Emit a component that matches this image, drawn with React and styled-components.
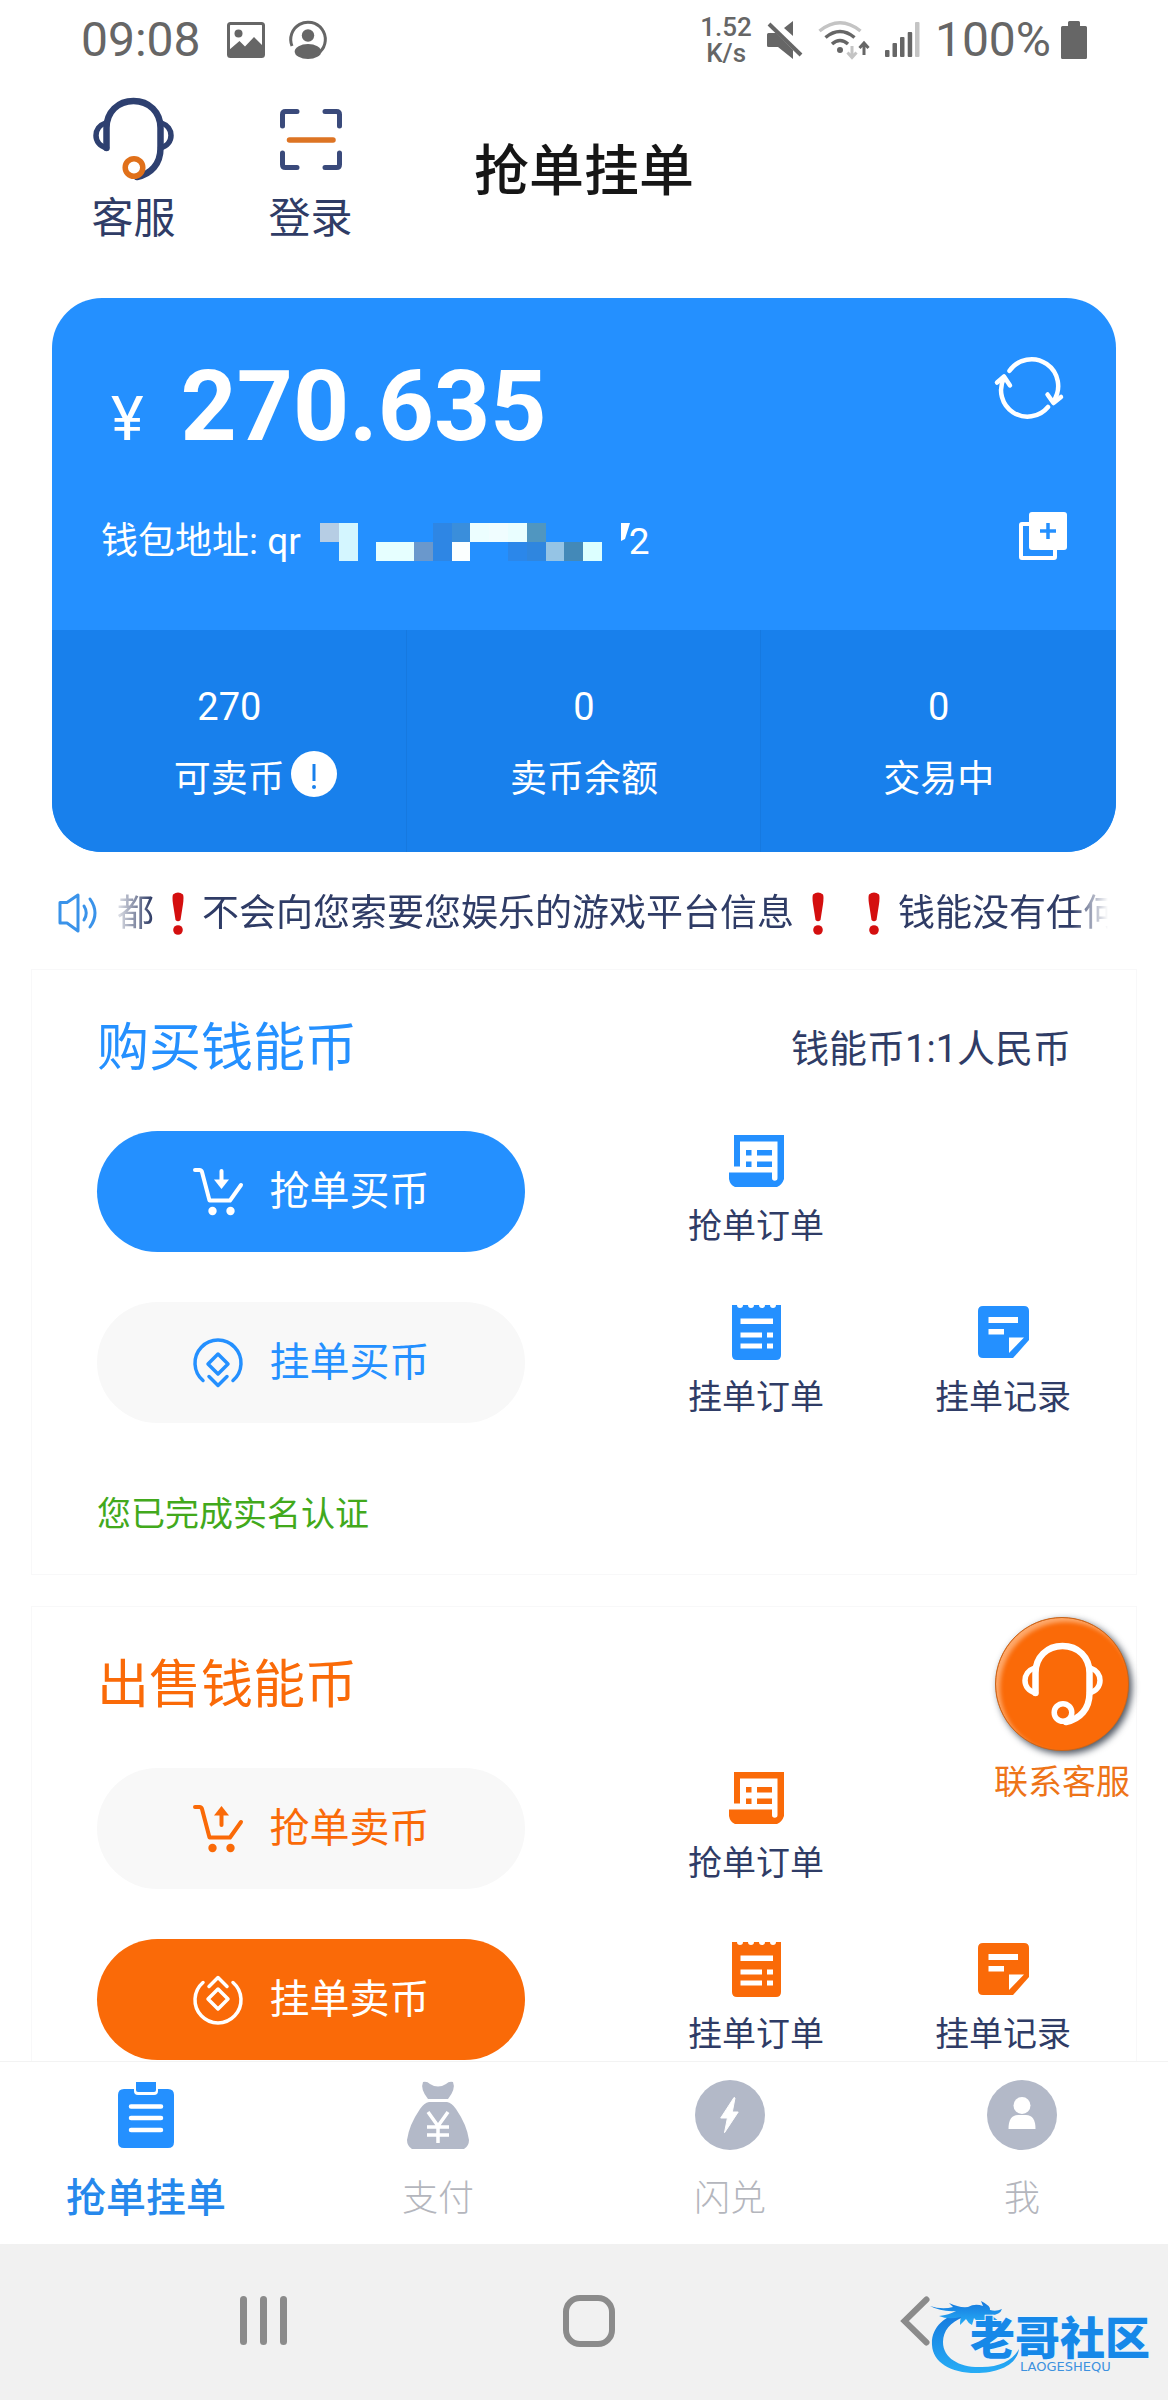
import React from 'react';
import styled, { createGlobalStyle } from 'styled-components';

const BLUE = '#2490ff';
const ORANGE = '#fa6a08';
const NAVY = '#2f3c66';
const STATUS = '#666666';
const MUTED = '#b3b9c8';

const GlobalStyle = createGlobalStyle`
  *, *::before, *::after { box-sizing: border-box; }
  body {
    margin: 0;
    background: #fff;
    color: ${NAVY};
    font-family: Roboto, 'Noto Sans CJK SC', sans-serif;
  }
  h1, h2, p { margin: 0; font-weight: 400; }
  button {
    padding: 0;
    border: none;
    background: none;
    color: inherit;
    font: inherit;
    cursor: pointer;
  }
  a { color: inherit; text-decoration: none; }
  svg { display: block; flex: none; overflow: visible; }
`;

const Shell = styled.div`
  display: flex;
  flex-direction: column;
  height: 100vh;
  overflow: hidden;
`;

const Viewport = styled.div`
  position: relative;
  flex: 1;
  min-height: 0;
`;

const Scroller = styled.main`
  height: 100%;
  overflow-y: auto;
  scrollbar-width: none;
`;

const StatusBar = styled.div`
  display: flex;
  justify-content: space-between;
  align-items: center;
  height: 76px;
  padding: 3px 81px 0;
  color: ${STATUS};
  font-size: 48px;
  line-height: 56px;
`;

const StatusGroup = styled.div`
  display: flex;
  align-items: center;
  gap: ${props => props.$gap}px;
`;

const Clock = styled.span`
  margin-right: 2px;
`;

const Speed = styled.span`
  font-size: 26px;
  font-weight: 500;
  line-height: 26px;
  text-align: center;
`;

const Battery = styled.span`
  display: flex;
  align-items: center;
  gap: 10px;
`;

const Header = styled.header`
  display: grid;
  grid-template-columns: 1fr auto 1fr;
  align-items: center;
  padding: 22px 45px 0;
`;

const HeaderActions = styled.div`
  display: flex;
`;

const HeaderButton = styled.button`
  display: flex;
  flex-direction: column;
  align-items: center;
  gap: 14px;
  width: 177px;
  font-size: 42px;
  line-height: 50px;
`;

const HeaderIcon = styled.span`
  display: flex;
  align-items: center;
  height: 82px;
`;

const Title = styled.h1`
  color: #161616;
  font-size: 55px;
  font-weight: 500;
  line-height: 64px;
`;

const Wallet = styled.section`
  margin: 54px 52px 0;
  border-radius: 50px;
  overflow: hidden;
  background: ${BLUE};
  color: #fff;
`;

const WalletTop = styled.div`
  display: flex;
  flex-direction: column;
  gap: 43px;
  padding: 47px 49px 58px 49px;
`;

const AmountRow = styled.div`
  display: flex;
  justify-content: space-between;
  align-items: flex-start;
  padding: 0 4px 0 10px;
`;

const Amount = styled.div`
  display: flex;
  align-items: baseline;
  gap: 37px;
  font-size: 98px;
  font-weight: 700;
  line-height: 124px;
`;

const Currency = styled.span`
  font-size: 62px;
  font-weight: 400;
  line-height: 64px;
`;

const RefreshButton = styled.button`
  display: flex;
  align-items: center;
  height: 88px;
`;

const AddressRow = styled.div`
  display: flex;
  justify-content: space-between;
  align-items: flex-start;
`;

const Address = styled.p`
  display: flex;
  align-items: center;
  font-size: 37px;
  line-height: 60px;
`;

const MaskGap = styled.span`
  margin-left: 19px;
`;

const Stats = styled.div`
  display: grid;
  grid-template-columns: repeat(3, 1fr);
  background: #1880ec;
`;

const Stat = styled.div`
  display: flex;
  flex-direction: column;
  align-items: center;
  gap: 23px;
  padding: 52px 0 47px;
  font-size: 38px;
  line-height: 50px;

  & + & { box-shadow: -1px 0 0 #1679e0; }
`;

const StatLabel = styled.span`
  position: relative;
  font-size: 37px;
`;

const StatBadge = styled.span`
  position: absolute;
  top: -4px;
  left: 100%;
  padding-left: 6px;
`;

const Notice = styled.div`
  display: flex;
  align-items: center;
  gap: 14px;
  margin: 32px 60px 27px 58px;
`;

const Ticker = styled.p`
  display: flex;
  align-items: center;
  flex: 1;
  min-width: 0;
  padding: 2px 0 0 5px;
  overflow: hidden;
  white-space: nowrap;
  font-size: 37px;
  line-height: 56px;
  mask-image: linear-gradient(to right, transparent 0, #000 40px, #000 calc(100% - 36px), transparent 100%);
`;

const MarkBox = styled.span`
  display: flex;
  flex: none;
  justify-content: center;
  width: 48px;
  margin-right: ${props => (props.$spaced ? 8 : 0)}px;
`;

const Panel = styled.section`
  margin: 0 31px 31px;
  padding: 49px 65px 38px;
  border: 1px solid #f8f8f9;
`;

const PanelHead = styled.div`
  display: flex;
  justify-content: space-between;
  align-items: center;
  margin-bottom: 52px;
`;

const PanelTitle = styled.h2`
  color: ${props => props.$color};
  font-size: 52px;
  line-height: 60px;
`;

const Rate = styled.span`
  font-size: 38px;
  line-height: 60px;
`;

const ActionGrid = styled.div`
  display: grid;
  grid-template-columns: 1fr 136px 136px;
  gap: 50px 111px;
`;

const PillButton = styled.button`
  display: flex;
  justify-content: center;
  align-items: center;
  gap: 27px;
  grid-column: 1;
  max-width: 428px;
  height: 121px;
  border-radius: 61px;
  background: ${props => (props.$filled ? props.$color : '#f8f8f8')};
  color: ${props => (props.$filled ? '#fff' : props.$color)};
  font-size: 40px;
  line-height: 50px;
`;

const OrderLink = styled.a`
  display: flex;
  flex-direction: column;
  align-items: center;
  gap: 13px;
  font-size: 34px;
  line-height: 44px;
  white-space: nowrap;
`;

const OrderIcon = styled.span`
  display: flex;
  align-items: center;
  height: 60px;
  color: ${props => props.$color};
`;

const Verified = styled.p`
  margin-top: 69px;
  color: #42a91c;
  font-size: 34px;
  line-height: 44px;
`;

const FloatingSupport = styled.button`
  position: absolute;
  right: 38px;
  bottom: 257px;
  display: flex;
  flex-direction: column;
  align-items: center;
  gap: 9px;
  color: #ee7418;
  font-size: 34px;
  line-height: 44px;
`;

const SupportDisc = styled.span`
  display: flex;
  justify-content: center;
  align-items: center;
  width: 134px;
  height: 134px;
  border: 1px solid #c7651c;
  border-radius: 50%;
  background: ${ORANGE};
  box-shadow: 3px 3px 7px rgba(20, 30, 45, 0.75), inset 4px 4px 4px rgba(255, 190, 140, 0.75);
`;

const TabBar = styled.nav`
  display: grid;
  grid-template-columns: repeat(4, 1fr);
  padding: 18px 0 20px;
  border-top: 1px solid #f3f3f3;
  background: #fff;
`;

const Tab = styled.a`
  display: flex;
  flex-direction: column;
  align-items: center;
  gap: 24px;
  color: ${props => (props.$active ? '#2688ec' : '#b4b6bd')};
  font-size: ${props => (props.$active ? 40 : 36)}px;
  font-weight: ${props => (props.$active ? 500 : 300)};
  line-height: 50px;
`;

const TabIcon = styled.span`
  display: flex;
  align-items: center;
  height: 70px;
`;

const SystemNav = styled.footer`
  position: relative;
  display: grid;
  grid-template-columns: repeat(3, 1fr);
  height: 156px;
  padding: 0 90px 3px 100px;
  background: #f1f1f1;
`;

const SystemButton = styled.button`
  display: flex;
  justify-content: center;
  align-items: center;
`;

const Watermark = styled.div`
  position: absolute;
  right: 12px;
  bottom: 23px;
`;

const PictureIcon = () => (
  <svg width="38" height="36" viewBox="0 0 38 36" fill={STATUS}>
    <rect x="1.5" y="1.5" width="35" height="33" rx="2" fill="none" stroke={STATUS} strokeWidth="3" />
    <circle cx="11.5" cy="11.5" r="4" />
    <path d="M2 28 12.500 19 18 24.500 27 15 36 24V34H2Z" />
  </svg>
);

const ProfileIcon = () => (
  <svg width="38" height="38" viewBox="0 0 38 38" fill={STATUS}>
    <path d="M3 25A17.300 17.300 0 1 1 31 31" fill="none" stroke={STATUS} strokeWidth="3" />
    <circle cx="19" cy="14.500" r="6.200" />
    <ellipse cx="19" cy="30.500" rx="13.300" ry="7.500" />
  </svg>
);

const MuteIcon = () => (
  <svg width="36" height="38" viewBox="0 0 36 38" fill={STATUS}>
    <path d="M26 0V15L17 7Z" />
    <path d="M1.500 12H9L26 29V38L11 26H1.500Q0 26 0 24.500V13.500Q0 12 1.500 12Z" />
    <path d="M2 3 34 34" stroke={STATUS} strokeWidth="4" />
  </svg>
);

const WifiIcon = () => (
  <svg width="52" height="38" viewBox="0 0 52 38" fill="none" stroke={STATUS} strokeWidth="3.500">
    <path d="M1.500 10Q22-6.500 42.500 10" stroke="#c4c4c4" />
    <path d="M7.500 16.500Q22 4.500 36.500 16.500" />
    <path d="M14 23Q22 16 30 23" />
    <circle cx="22" cy="29" r="3" fill={STATUS} stroke="none" />
    <path d="M34 25V36M29.500 31.500 34 36.500 38.500 31.500" stroke="#c4c4c4" strokeWidth="3" />
    <path d="M46 34V22M41.500 27 46 22 50.500 27" strokeWidth="3" />
  </svg>
);

const SignalIcon = () => (
  <svg width="35" height="35" viewBox="0 0 35 35" fill={STATUS}>
    <rect x="0" y="28" width="4.500" height="7" rx="1" />
    <rect x="7.500" y="21" width="4.500" height="14" rx="1" />
    <rect x="15" y="15" width="4.500" height="20" rx="1" />
    <rect x="22.700" y="10" width="4.500" height="25" rx="1" />
    <rect x="30" y="0" width="4.500" height="35" rx="1" fill="#c4c4c4" />
  </svg>
);

const BatteryIcon = () => (
  <svg width="26" height="38" viewBox="0 0 26 38" fill={STATUS}>
    <path d="M8.500 0H17.500Q19 0 19 1.500V5H24.500Q26 5 26 6.500V36.500Q26 38 24.500 38H1.500Q0 38 0 36.500V6.500Q0 5 1.500 5H7V1.500Q7 0 8.500 0Z" />
  </svg>
);

const HeadsetIcon = ({ color, micColor }) => (
  <svg width="81" height="82" viewBox="0 0 81 82" fill="none" stroke={color} strokeWidth="6.500" strokeLinecap="round">
    <path d="M13.500 50V30C13.500 14 25 3 40.500 3S67.500 14 67.500 30V50C67.500 66 58 76 44 79" />
    <path d="M13.500 50C6.500 48 3 43 3 37.500S6.500 27 12.500 25" strokeWidth="5.500" />
    <path d="M67.500 50C74.500 48 78 43 78 37.500S74.500 27 68.500 25" strokeWidth="5.500" />
    <circle cx="41" cy="69.500" r="8.800" stroke={micColor} strokeWidth="5.500" />
  </svg>
);

const ScanIcon = () => (
  <svg width="62" height="61" viewBox="0 0 62 61" fill="none" stroke="#3a4a7b" strokeWidth="5" strokeLinecap="round">
    <path d="M2.500 17V5.500Q2.500 2.500 5.500 2.500H17M45 2.500H56.500Q59.500 2.500 59.500 5.500V17M2.500 44V55.500Q2.500 58.500 5.500 58.500H17M45 58.500H56.500Q59.500 58.500 59.500 55.500V44" />
    <path d="M9.500 31H53" stroke="#dd7424" strokeWidth="5.500" />
  </svg>
);

const RefreshIcon = () => (
  <svg width="68" height="58" viewBox="0 0 68 58" fill="none" stroke="#fff" strokeWidth="4.500" strokeLinecap="round" strokeLinejoin="round">
    <path d="M14.500 10.800A26.500 26.500 0 0 1 58.500 41" />
    <path d="M52.500 34.500 58.500 43 66 37" />
    <path d="M53 47A26.500 26.500 0 0 1 9 18" />
    <path d="M2 22.500 9 16.500 15 25.500" />
  </svg>
);

const CopyIcon = () => (
  <svg width="48" height="48" viewBox="0 0 48 48" fill="none">
    <rect x="2" y="12" width="34" height="34" rx="1" stroke="#fff" strokeWidth="4" />
    <rect x="10" y="0" width="38" height="38" rx="3" fill="#fff" />
    <path d="M29 11V27M21 19H37" stroke={BLUE} strokeWidth="3.500" />
  </svg>
);

// obscured middle part of the wallet address, one entry per block: column, row, colour
const MASK_BLOCKS = [
  [0, 0, '#b6cde4'], [1, 0, '#d4f6ff'], [1, 1, '#d4f6ff'],
  [3, 1, '#e6ffff'], [4, 1, '#e6ffff'], [5, 1, '#6a98cc'],
  [6, 0, '#2e86e4'], [6, 1, '#2e86e4'], [7, 0, '#3a8edb'], [7, 1, '#fbffff'],
  [8, 0, '#ecfeff'], [9, 0, '#f0fdff'], [10, 0, '#e9feff'], [11, 0, '#5096c0'],
  [10, 1, '#2b87ea'], [11, 1, '#2f86df'], [12, 1, '#95c4e5'], [13, 1, '#4389b8'], [14, 1, '#dcffff'],
];

const AddressMask = () => (
  <svg width="309" height="38" viewBox="0 0 309 38" shapeRendering="crispEdges">
    {MASK_BLOCKS.map(([col, row, color]) => (
      <rect key={`${col}-${row}`} x={col * 18.8} y={row * 19} width="18.800" height="19" fill={color} />
    ))}
    <path d="M301 0H310L305 16 301 18Z" fill="#fff" shapeRendering="auto" />
  </svg>
);

const AlertIcon = () => (
  <svg width="46" height="46" viewBox="0 0 46 46">
    <circle cx="23" cy="23" r="23" fill="#fff" />
    <path d="M23 13V30" stroke="#1880ec" strokeWidth="3" />
    <circle cx="23" cy="36" r="2" fill="#1880ec" />
  </svg>
);

const SpeakerIcon = () => (
  <svg width="40" height="40" viewBox="0 0 40 40" fill="none" stroke="#3a93ea" strokeWidth="3" strokeLinecap="round" strokeLinejoin="round">
    <path d="M2 9.500H9L20 2V38L9 30H2Z" />
    <path d="M26 13Q30.500 20 26 27M32 6Q42 20 32 34" />
  </svg>
);

const RedMark = () => (
  <svg width="14" height="44" viewBox="0 0 14 44" fill="#d40f0f">
    <path d="M2 2.500Q7-1.500 12 2.500Q13 5 12 12L9.500 28Q7 30.500 4.500 28L2 12Q1 5 2 2.500Z" />
    <circle cx="7" cy="38" r="4.800" />
  </svg>
);

const CartIcon = ({ up }) => (
  <svg width="50" height="48" viewBox="0 0 50 48" fill="none" stroke="currentColor" strokeWidth="4" strokeLinecap="round" strokeLinejoin="round">
    <path d="M2 2H6.500Q8.500 2 9 4L16.500 32.500H37L48 17" />
    <circle cx="19.500" cy="43" r="4.200" fill="currentColor" stroke="none" />
    <circle cx="37.500" cy="43" r="4.200" fill="currentColor" stroke="none" />
    {up ? (
      <>
        <path d="M28.500 8V20" />
        <path d="M21 10.500 28.500 1 36 10.500Z" fill="currentColor" stroke="none" />
      </>
    ) : (
      <>
        <path d="M28.500 3V14" />
        <path d="M21 11.500 28.500 21 36 11.500Z" fill="currentColor" stroke="none" />
      </>
    )}
  </svg>
);

const CoinIcon = ({ up }) => (
  <svg width="50" height="50" viewBox="0 0 50 50" fill="none" stroke="currentColor" strokeWidth="3.500" strokeLinecap="round" strokeLinejoin="round">
    <g transform={up ? 'rotate(180 25 25)' : undefined}>
      <path d="M10 42.500A23 23 0 1 1 40 42.500" />
      <path d="M25 16 35 26 25 36 15 26Z" />
      <path d="M16 38.500 25 47.500 34 38.500" />
    </g>
  </svg>
);

const ScrollIcon = () => (
  <svg width="55" height="52" viewBox="0 0 55 52" fill="currentColor">
    <path d="M5 0H55V44Q53 50 48 52H6Q1 50 0 44V37.500H43V43A2.750 2.750 0 0 0 48.500 43V6.500H11V31.500H5Z" />
    <path d="M17 15H22.500V20.500H17ZM28 15H43V20.500H28ZM17 26.500H22.500V32H17ZM28 26.500H43V32H28Z" />
  </svg>
);

const ReceiptIcon = () => (
  <svg width="49" height="55" viewBox="0 0 49 55" fill="currentColor">
    <path d="M0 0H5A3 3 0 0 0 11 0H16A3 3 0 0 0 22 0H27A3 3 0 0 0 33 0H38A3 3 0 0 0 44 0H49V50Q49 55 44 55H5Q0 55 0 50Z" />
    <path d="M8.500 13.500H41V19H8.500ZM8.500 27.500H30V32.500H8.500ZM35 27.500H41V32.500H35ZM8.500 38.500H30V43.500H8.500ZM35 38.500H41V43.500H35Z" fill="#fff" />
  </svg>
);

const NoteIcon = () => (
  <svg width="51" height="52" viewBox="0 0 51 52" fill="currentColor">
    <path d="M5 0H46Q51 0 51 5V34L35 52H5Q0 52 0 47V5Q0 0 5 0Z" />
    <path d="M10.500 11H40V17H10.500ZM10.500 23H26V28.500H10.500ZM31 31.500H46L31 47Z" fill="#fff" />
  </svg>
);

const ClipboardIcon = () => (
  <svg width="56" height="66" viewBox="0 0 56 66" fill={BLUE}>
    <path d="M6 7H50Q56 7 56 13V60Q56 66 50 66H6Q0 66 0 60V13Q0 7 6 7Z" />
    <path d="M16 0H40V9Q40 13 36 13H20Q16 13 16 9Z" fill="#fff" />
    <path d="M18 0H38V8Q38 10 36 10H20Q18 10 18 8Z" />
    <path d="M13 24.500H43M13 36H43M13 48H43" stroke="#fff" strokeWidth="4.500" strokeLinecap="round" />
  </svg>
);

const MoneyBagIcon = () => (
  <svg width="62" height="67" viewBox="0 0 62 67" fill={MUTED}>
    <path d="M16 0Q20-1 23 2Q31 7 39 2Q42-1 46 0Q49 7 41 17H21Q13 7 16 0Z" />
    <path d="M22 20H40Q45 21 49 27Q60 43 62 58Q62 64 57 67H5Q0 64 0 58Q2 43 13 27Q17 21 22 20Z" />
    <path d="M21 30 31 44 41 30M20 45H42M20 53H42M31 44V61" fill="none" stroke="#fff" strokeWidth="3.500" />
  </svg>
);

const BoltIcon = () => (
  <svg width="70" height="70" viewBox="0 0 70 70">
    <circle cx="35" cy="35" r="35" fill={MUTED} />
    <path d="M39 17.500 25.700 38H32.400L29.500 52.700 43.200 32H37.300L40 18Z" fill="#fff" stroke="#fff" strokeLinejoin="round" />
  </svg>
);

const MeIcon = () => (
  <svg width="70" height="70" viewBox="0 0 70 70">
    <circle cx="35" cy="35" r="35" fill={MUTED} />
    <circle cx="35" cy="25.500" r="8.500" fill="#fff" />
    <path d="M21.500 49Q21.500 35 31 35H39Q48.500 35 48.500 49Z" fill="#fff" />
  </svg>
);

const DragonLogo = () => (
  <svg width="226" height="80" viewBox="0 0 226 80">
    <defs>
      <linearGradient id="dragonBlue" x1="0" y1="0" x2="0" y2="1">
        <stop offset="0" stopColor="#1577dd" />
        <stop offset="1" stopColor="#27adf6" />
      </linearGradient>
    </defs>
    <g fill="url(#dragonBlue)">
      <path d="M34 15C14 18 1 31 2 48C3 66 22 77 49 76C71 75 87 67 89 52C83 63 70 70 52 70C31 71 13 62 13 45C13 34 20 25 34 20Z" />
      <path d="M0 9Q12 13 23 10L19 6Q29 11 38 10Q45 6 53 9L51 4Q61 9 60 13Q66 15 72 12Q70 18 61 18L70 25Q60 24 55 21L60 28Q48 27 44 21L42 28Q38 26 36 22L30 28Q30 23 31 20Q18 23 9 19Q19 18 26 14Q11 15 0 9Z" />
    </g>
    <text x="40" y="58" fill="#1688e8" stroke="#e8f5ff" strokeWidth="2" paintOrder="stroke" fontSize="45" fontWeight="900">老哥社区</text>
    <text x="90" y="74" fill="#3d91df" fontFamily="DejaVu Sans, sans-serif" fontSize="13">LAOGESHEQU</text>
  </svg>
);

const PANELS = [
  {
    title: '购买钱能币',
    color: BLUE,
    rate: '钱能币1:1人民币',
    verified: '您已完成实名认证',
    up: false,
    grab: '抢单买币',
    list: '挂单买币',
    filled: 'grab',
  },
  {
    title: '出售钱能币',
    color: ORANGE,
    up: true,
    grab: '抢单卖币',
    list: '挂单卖币',
    filled: 'list',
  },
];

const TABS = [
  { label: '抢单挂单', icon: <ClipboardIcon />, active: true },
  { label: '支付', icon: <MoneyBagIcon /> },
  { label: '闪兑', icon: <BoltIcon /> },
  { label: '我', icon: <MeIcon /> },
];

function OrderEntry({ icon, color, children }) {
  return (
    <OrderLink href="#">
      <OrderIcon $color={color}>{icon}</OrderIcon>
      {children}
    </OrderLink>
  );
}

function TradePanel({ panel }) {
  const { title, color, rate, verified, up, grab, list, filled } = panel;
  return (
    <Panel>
      <PanelHead>
        <PanelTitle $color={color}>{title}</PanelTitle>
        {rate && <Rate>{rate}</Rate>}
      </PanelHead>
      <ActionGrid>
        <PillButton $color={color} $filled={filled === 'grab'}>
          <CartIcon up={up} />
          {grab}
        </PillButton>
        <OrderEntry icon={<ScrollIcon />} color={color}>抢单订单</OrderEntry>
        <PillButton $color={color} $filled={filled === 'list'}>
          <CoinIcon up={up} />
          {list}
        </PillButton>
        <OrderEntry icon={<ReceiptIcon />} color={color}>挂单订单</OrderEntry>
        <OrderEntry icon={<NoteIcon />} color={color}>挂单记录</OrderEntry>
      </ActionGrid>
      {verified && <Verified>{verified}</Verified>}
    </Panel>
  );
}

function App() {
  return (
    <Shell>
      <GlobalStyle />
      <Viewport>
        <Scroller>
          <StatusBar>
            <StatusGroup $gap={24}>
              <Clock>09:08</Clock>
              <PictureIcon />
              <ProfileIcon />
            </StatusGroup>
            <StatusGroup $gap={15}>
              <Speed>1.52<br />K/s</Speed>
              <MuteIcon />
              <WifiIcon />
              <SignalIcon />
              <Battery>
                100%
                <BatteryIcon />
              </Battery>
            </StatusGroup>
          </StatusBar>

          <Header>
            <HeaderActions>
              <HeaderButton>
                <HeaderIcon><HeadsetIcon color="#2e4070" micColor="#e0701a" /></HeaderIcon>
                客服
              </HeaderButton>
              <HeaderButton>
                <HeaderIcon><ScanIcon /></HeaderIcon>
                登录
              </HeaderButton>
            </HeaderActions>
            <Title>抢单挂单</Title>
          </Header>

          <Wallet>
            <WalletTop>
              <AmountRow>
                <Amount>
                  <Currency>¥</Currency>
                  270.635
                </Amount>
                <RefreshButton aria-label="刷新"><RefreshIcon /></RefreshButton>
              </AmountRow>
              <AddressRow>
                <Address>
                  钱包地址: qr
                  <MaskGap><AddressMask /></MaskGap>
                  2
                </Address>
                <button aria-label="复制"><CopyIcon /></button>
              </AddressRow>
            </WalletTop>
            <Stats>
              <Stat>
                270
                <StatLabel>
                  可卖币
                  <StatBadge><AlertIcon /></StatBadge>
                </StatLabel>
              </Stat>
              <Stat>
                0
                <StatLabel>卖币余额</StatLabel>
              </Stat>
              <Stat>
                0
                <StatLabel>交易中</StatLabel>
              </Stat>
            </Stats>
          </Wallet>

          <Notice>
            <SpeakerIcon />
            <Ticker>
              都
              <MarkBox><RedMark /></MarkBox>
              不会向您索要您娱乐的游戏平台信息
              <MarkBox $spaced><RedMark /></MarkBox>
              <MarkBox><RedMark /></MarkBox>
              钱能没有任何
            </Ticker>
          </Notice>

          {PANELS.map(panel => <TradePanel key={panel.title} panel={panel} />)}
        </Scroller>

        <FloatingSupport>
          <SupportDisc><HeadsetIcon color="#fff" micColor="#fff" /></SupportDisc>
          联系客服
        </FloatingSupport>
      </Viewport>

      <TabBar>
        {TABS.map(tab => (
          <Tab key={tab.label} href="#" $active={tab.active}>
            <TabIcon>{tab.icon}</TabIcon>
            {tab.label}
          </Tab>
        ))}
      </TabBar>

      <SystemNav>
        <SystemButton aria-label="最近任务">
          <svg width="47" height="49" viewBox="0 0 47 49" fill="#8b8b8b">
            <rect x="0" width="7" height="49" rx="3.500" />
            <rect x="20" width="7" height="49" rx="3.500" />
            <rect x="40" width="7" height="49" rx="3.500" />
          </svg>
        </SystemButton>
        <SystemButton aria-label="主屏幕">
          <svg width="52" height="52" viewBox="0 0 52 52" fill="none" stroke="#8b8b8b" strokeWidth="6">
            <rect x="3" y="3" width="46" height="46" rx="14" />
          </svg>
        </SystemButton>
        <SystemButton aria-label="返回">
          <svg width="30" height="50" viewBox="0 0 30 50" fill="none" stroke="#8b8b8b" strokeWidth="6" strokeLinecap="round">
            <path d="M26.500 3.500 4.500 25 26.500 46.500" />
          </svg>
        </SystemButton>
        <Watermark><DragonLogo /></Watermark>
      </SystemNav>
    </Shell>
  );
}

export default App;
